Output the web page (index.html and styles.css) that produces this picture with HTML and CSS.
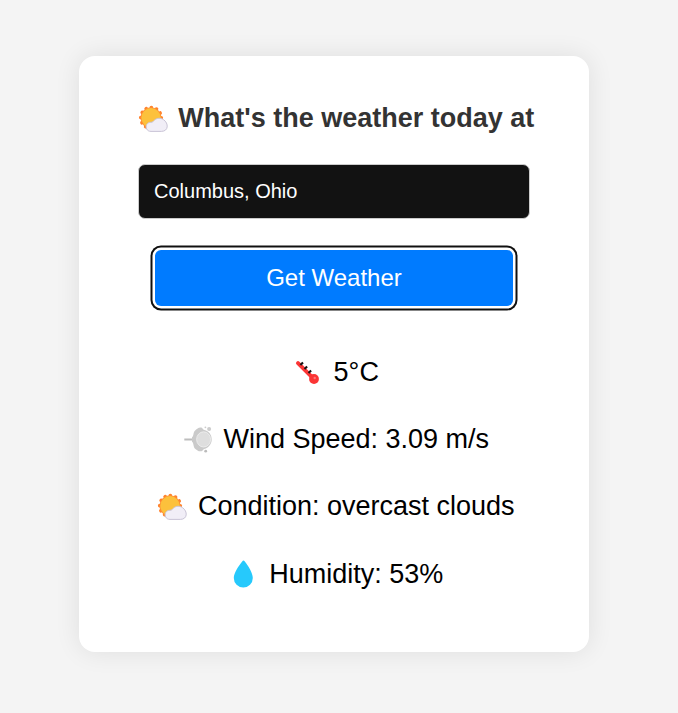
FILE: index.html
```html
<!DOCTYPE html>
<html lang="en">
<head>
<meta charset="utf-8">
<title>Weather</title>
<link rel="stylesheet" href="styles.css">
</head>
<body>
<svg class="defs" aria-hidden="true">
  <symbol id="sun" viewBox="0 0 37 37">
    <circle cx="17" cy="17.8" r="10.3" stroke="#ff822d" stroke-width="3.6" stroke-linecap="round" stroke-dasharray=".1 5.293"/>
    <circle cx="17" cy="17.8" r="10.5" fill="#ff8f35"/>
    <circle cx="17" cy="17.8" r="9.7" fill="#fcc13c"/>
    <path d="M17 31.4c-6.6 0-6.3-9.3-.2-9.1 2.2.1 2.3-1.1 3.8-2.3 2.6-2.3 6.1-2.2 8.7-.5 5.8 3.8 5.2 11.9-1.9 11.9z" fill="#f1eef7" stroke="#c9c4d6" stroke-width="1"/>
  </symbol>
</svg>
<main class="card">
  <h1 class="row title"><svg class="icon"><use href="#sun"/></svg><span>What's the weather today at</span></h1>
  <input class="city" type="text" value="Columbus, Ohio" aria-label="City">
  <button class="go" type="button">Get Weather</button>
  <section class="results">
    <p class="row"><svg class="icon" viewBox="0 0 37 37"><path d="M9 9.2l14 14" stroke="#fb3535" stroke-width="4" stroke-linecap="round"/><circle cx="25" cy="25" r="4.9" fill="#fb3535"/><circle cx="25.7" cy="24" r="1.2" fill="#ff7777"/><path d="M11.4 11l2.6-2.6M15.5 15l2.6-2.6M19.5 19l2.6-2.6" stroke="#151515" stroke-width="2.1"/></svg><span>5°C</span></p>
    <p class="row"><svg class="icon" viewBox="0 0 37 37"><path d="M5.3 18.5h9" stroke="#bdbdbd" stroke-width="2"/><path d="M13 16.2c2-1.2 1-5.6 3.4-7 1.6-1.3 3.1-3 5.9-2.6 1.4.2 1.4 2 3 2.5 4.6 1.2 7.4 4.7 7.4 9.3 0 4.8-3.3 8.2-7.4 9.5-1.4.5-1.6 2.2-3 2.4-2.8.4-4.4-1-5.9-2.3-2.4-1.7-1.4-6-3.4-7.2z" fill="#cacaca"/><ellipse cx="24.6" cy="18.4" rx="7" ry="7.6" fill="#dedede" stroke="#f0f0f0" stroke-width=".8"/><circle cx="30.1" cy="8" r="2" fill="#ccc"/><circle cx="26.4" cy="6.3" r=".9" fill="#ccc"/><circle cx="26.7" cy="30.2" r="1.4" fill="#bbb"/></svg><span>Wind Speed: 3.09 m/s</span></p>
    <p class="row"><svg class="icon"><use href="#sun"/></svg><span>Condition: overcast clouds</span></p>
    <p class="row"><svg class="icon" viewBox="0 0 37 37"><path d="M17.2 5.4q1.3-1.6 2.6 0c3.5 4.5 8 11.3 8 16.7a9.5 9.5 0 0 1-19 0c0-5.4 4.9-12.2 8.4-16.7z" fill="#26c9fc"/></svg><span>Humidity: 53%</span></p>
  </section>
</main>
</body>
</html>
```
FILE: styles.css
```css
* { box-sizing: border-box; }
body {
  margin: 0;
  min-height: 100vh;
  padding-top: 56px;
  background: #f4f4f4;
  font-family: Arial, "Liberation Sans", sans-serif;
  color: #000;
}
.defs { position: absolute; width: 0; height: 0; }
.card {
  width: 510px;
  height: 596px;
  margin-left: 79px;
  padding-top: 28px;
  display: flex;
  flex-direction: column;
  align-items: center;
  background: #fff;
  border-radius: 16px;
  box-shadow: 0 0 26px rgba(0, 0, 0, .09);
}
.row {
  margin: 0;
  height: 67.4px;
  display: flex;
  align-items: center;
  justify-content: center;
  gap: 7.5px;
  font-size: 27px;
  line-height: 31px;
  white-space: nowrap;
}
.icon { width: 37px; height: 37px; flex: none; fill: none; }
.title { height: 69px; color: #333; font-weight: bold; }
.city {
  width: 392px;
  height: 55px;
  margin: 11px 0 0;
  padding: 0 15px;
  background: #121212;
  border: 1px solid #ccc;
  border-radius: 7px;
  color: #fff;
  font: 20px Arial, "Liberation Sans", sans-serif;
}
.go {
  width: 358px;
  height: 56px;
  margin: 31px 0 0;
  padding: 0;
  border: 0;
  border-radius: 6px;
  background: #007bff;
  box-shadow: 0 0 0 2.5px #fff, 0 0 0 4.5px #101010;
  color: #fff;
  font: 24px Arial, "Liberation Sans", sans-serif;
}
.results { margin-top: 32.4px; }
```
